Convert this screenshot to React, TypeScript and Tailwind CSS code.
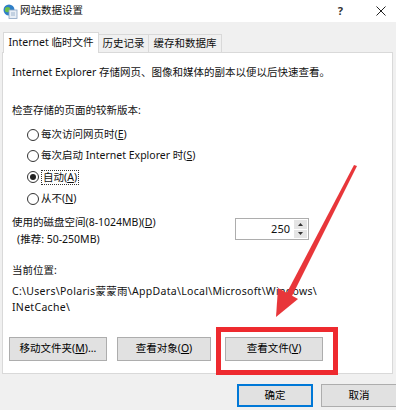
import React from 'react';

const Radio = ({ checked }: { checked?: boolean }) => (
  <span className="w-[12px] h-[12px] rounded-full border border-[#333] bg-white flex items-center justify-center mr-[2px] shrink-0">
    {checked && <span className="w-[6px] h-[6px] rounded-full bg-[#222]" />}
  </span>
);

const Btn = ({ w, children, primary }: { w: string; children: React.ReactNode; primary?: boolean }) => (
  <button
    className={
      'h-[24px] flex items-center justify-center bg-[#e1e1e1] text-black ' +
      w +
      (primary ? ' border-2 border-[#0078d7]' : ' border border-[#adadad]')
    }
  >
    {children}
  </button>
);

export default function App() {
  return (
    <div className="relative w-[396px] h-[410px] overflow-hidden bg-[#f0f0f0] text-[10.5px] text-[#111] font-['Noto_Sans','Noto_Sans_CJK_SC',sans-serif]">
      {/* title bar */}
      <div className="h-[22px] bg-white flex items-center pl-[3px]">
        <svg width="15" height="15" viewBox="0 0 15 15" className="mr-[2px]">
          <circle cx="6" cy="6" r="5.5" fill="#2f7fc8" />
          <path d="M2 4 Q5 2 7 4 Q8 6 6 8 Q3 9 2 7Z" fill="#6bbf4a" />
          <rect x="6" y="6" width="8" height="8.5" fill="#e8eef6" stroke="#8aa4c4" strokeWidth="0.8" />
          <path d="M8 9h4M8 11h4" stroke="#8aa4c4" strokeWidth="0.8" />
        </svg>
        <span className="text-[10.5px]">网站数据设置</span>
        <span className="ml-auto mr-[33px] text-[11px] font-bold text-[#333]">?</span>
        <svg width="10" height="10" viewBox="0 0 10 10" className="mr-[10px]">
          <path d="M0.5 0.5L9.5 9.5M9.5 0.5L0.5 9.5" stroke="#222" strokeWidth="1" />
        </svg>
      </div>

      {/* tabs */}
      <div className="flex items-end pl-[3px] pt-[10px] h-[30px]">
        <div className="relative z-10 h-[21px] -mb-px w-[96px] bg-white border border-[#d9d9d9] border-b-0 flex items-center justify-center">
          Internet 临时文件
        </div>
        <div className="h-[18px] w-[50px] border border-[#d9d9d9] border-l-0 border-b-0 flex items-center justify-center">
          历史记录
        </div>
        <div className="h-[18px] w-[73px] border border-[#d9d9d9] border-l-0 border-b-0 flex items-center justify-center">
          缓存和数据库
        </div>
      </div>

      {/* panel */}
      <div className="ml-[2px] mr-[3px] h-[322px] bg-white border border-[#d9d9d9]">
        <div className="pl-[9px]">
          <div className="mt-[11px] h-[16px] leading-[16px]">
            Internet Explorer 存储网页、图像和媒体的副本以便以后快速查看。
          </div>
          <div className="mt-[22px] h-[16px] leading-[16px]">检查存储的页面的较新版本:</div>
          <div className="mt-[6px] pl-[15px]">
            <div className="h-[21px] flex items-center">
              <Radio />
              每次访问网页时(<u>E</u>)
            </div>
            <div className="h-[21px] flex items-center">
              <Radio />
              每次启动 Internet Explorer 时(<u>S</u>)
            </div>
            <div className="h-[22px] flex items-center">
              <Radio checked />
              <span className="border border-dotted border-[#333] px-[1px] leading-[13px]">
                自动(<u>A</u>)
              </span>
            </div>
            <div className="h-[22px] flex items-center">
              <Radio />
              从不(<u>N</u>)
            </div>
          </div>
          <div className="mt-[4px] flex items-start">
            <div className="w-[223px] leading-[17px]">
              <div>使用的磁盘空间(8-1024MB)(<u>D</u>)</div>
              <div className="pl-[5px]">(推荐: 50-250MB)</div>
            </div>
            <div className="mt-[4px] flex h-[22px] w-[74px] border border-[#adadad] bg-white">
              <div className="flex-1 flex items-center justify-end pr-[3px] text-[11px]">250</div>
              <div className="w-[15px] flex flex-col gap-[1px] p-[1px]">
                <div className="flex-1 bg-[#e5e5e5] flex items-center justify-center">
                  <svg width="5" height="3" viewBox="0 0 5 3"><path d="M0 3L2.5 0L5 3Z" fill="#333" /></svg>
                </div>
                <div className="flex-1 bg-[#e5e5e5] flex items-center justify-center">
                  <svg width="5" height="3" viewBox="0 0 5 3"><path d="M0 0L2.5 3L5 0Z" fill="#333" /></svg>
                </div>
              </div>
            </div>
          </div>
          <div className="mt-[14px] h-[16px] leading-[16px]">当前位置:</div>
          <div className="mt-[5px] leading-[16px] tracking-[0.3px]">
            <div>C:\Users\Polaris蒙蒙雨\AppData\Local\Microsoft\Windows\</div>
            <div>INetCache\</div>
          </div>
        </div>
        <div className="mt-[22px] pl-[6px] flex">
          <Btn w="w-[98px]">移动文件夹(<u>M</u>)...</Btn>
          <div className="w-[10px]" />
          <Btn w="w-[94px]">查看对象(<u>O</u>)</Btn>
          <div className="w-[14px]" />
          <Btn w="w-[98px]">查看文件(<u>V</u>)</Btn>
        </div>
      </div>

      {/* dialog buttons */}
      <div className="mt-[10px] pl-[237px] flex gap-[8px]">
        <Btn w="w-[76px] shrink-0 !h-[23px]" primary>确定</Btn>
        <Btn w="w-[76px] shrink-0 !h-[23px]">取消</Btn>
      </div>

      {/* annotation: red box */}
      <div className="absolute left-[216px] top-[327px] w-[122px] h-[48px] border-[5px] border-[#ee2a2f] pointer-events-none" />

      {/* annotation: red arrow */}
      <svg className="absolute inset-0 pointer-events-none" width="396" height="410" viewBox="0 0 396 410">
        <path d="M357 166 L354 165 L283 300 L289 302 Z" fill="#e8363a" />
        <path d="M276 317 L278 288 L298 299 Z" fill="#e8363a" />
      </svg>
    </div>
  );
}
